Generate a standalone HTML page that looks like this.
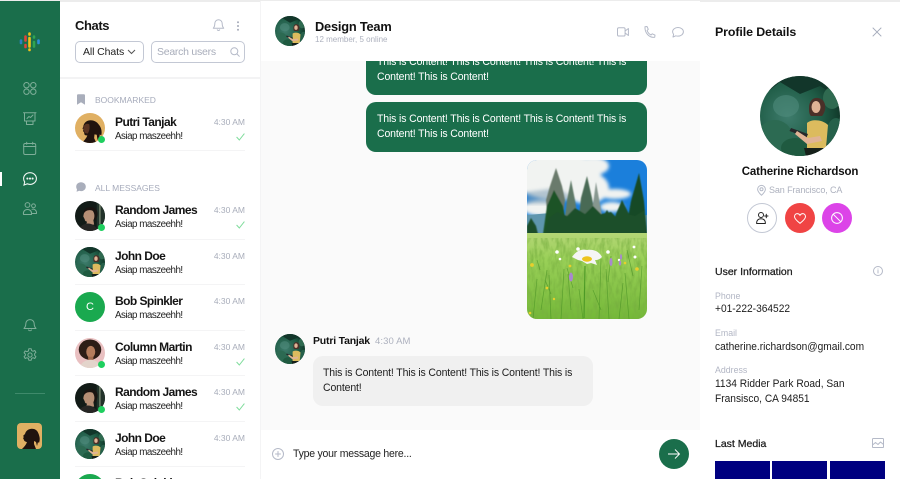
<!DOCTYPE html>
<html><head><meta charset="utf-8"><title>Chats</title>
<style>
html,body{margin:0;padding:0;background:#fff}
#p{position:relative;width:900px;height:479px;overflow:hidden;font-family:"Liberation Sans",sans-serif;color:#141414;background:#fff;filter:blur(.3px)}
#p div{position:absolute;white-space:nowrap}
#p svg{position:absolute;overflow:visible}
.n{left:115px;font-weight:700;font-size:12px;line-height:16px;letter-spacing:-.55px}
.s{left:115px;font-size:9.8px;line-height:14px;letter-spacing:-.5px;color:#222;transform:scaleY(1.07)}
.t{right:655px;font-size:8.5px;line-height:12px;color:#a8adba}
.h{left:95px;font-size:8.5px;line-height:12px;color:#a6abbb}
.l{left:75px;width:170px;height:1px;background:#f4f4f5}
.w{left:377px;font-size:10.5px;line-height:15px;color:#fff;letter-spacing:-.14px;transform:scaleY(1.07)}
.g{font-size:8.8px;line-height:12px;color:#b2b6c4;left:715px}
.v{font-size:10.2px;line-height:15px;left:715px;color:#1b1b1b;transform:scaleY(1.07)}
.b{font-size:10.5px;line-height:14px;left:715px;color:#1b1b1b;-webkit-text-stroke:.25px #1b1b1b}
.dot{width:7px;height:7px;border-radius:50%;background:#1fcf5f;border:0}
.ic{fill:none;stroke:#7fae99;stroke-width:1;stroke-linecap:round;stroke-linejoin:round}
.gr{fill:none;stroke:#b5bac8;stroke-width:1;stroke-linecap:round;stroke-linejoin:round}
</style></head><body><div id="p">
<svg width="0" height="0" style="position:absolute"><defs>
<clipPath id="c"><circle cx="40" cy="40" r="40"/></clipPath>
<radialGradient id="fg" cx=".35" cy=".5" r=".7"><stop offset="0" stop-color="#3e7c6c"/><stop offset=".6" stop-color="#1f5c46"/><stop offset="1" stop-color="#0e3224"/></radialGradient>
<symbol id="forest" viewBox="0 0 80 80"><g clip-path="url(#c)">
<rect width="80" height="80" fill="url(#fg)"/>
<path d="M0 0H80V22L60 10 40 18 20 6 0 22Z" fill="#12362a"/>
<ellipse cx="26" cy="30" rx="13" ry="11" fill="#4f8a7c" opacity=".6"/>
<ellipse cx="15" cy="60" rx="17" ry="16" fill="#2c6a52"/>
<ellipse cx="35" cy="72" rx="14" ry="10" fill="#1f5a40"/>
<ellipse cx="72" cy="22" rx="9" ry="11" fill="#2f6a50"/>
<ellipse cx="76" cy="60" rx="10" ry="18" fill="#25604a"/>
<path d="M47 47C51 43 62 43 68 49L66 72H47Z" fill="#dcbb5e"/>
<path d="M49 32c0-8 5-11 9-10 6 1 8 6 7 12-1 3-2 5-3 6H51c-2-2-2-5-2-8z" fill="#4a3028"/>
<ellipse cx="56" cy="31" rx="4.500" ry="6" fill="#e0b395"/>
<path d="M31 52l17 6-1.500 3.500-17-6.500z" fill="#26282a"/>
<path d="M37 55l11 7 12-2 2 5-15 3-12-10z" fill="#e0b395"/>
<path d="M44 72h20l-4 8H46z" fill="#16201a"/>
</g></symbol>
<symbol id="gold" viewBox="0 0 80 80"><g clip-path="url(#c)">
<rect width="80" height="80" fill="#e0b063"/>
<path d="M22 36c2-13 14-19 26-16 10 3 14 8 19 16 4 7 5 16 3 24l-4-3c0 6-2 11-6 15l-2-14-6-1-1 10 6 13H18c6-6 12-12 15-20-4 0-8-1-8-4l-1-5-3-3 2-3-3-3z" fill="#20130e"/>
<path d="M22 38c3-9 10-11 16-8 2 8 1 17-4 25-4-1-8-1-9-4l-1-5-3-3 2-3z" fill="#5a3422"/>
</g></symbol>
<symbol id="dark" viewBox="0 0 80 80"><g clip-path="url(#c)">
<rect width="80" height="80" fill="#121b17"/>
<rect x="58" y="0" width="22" height="80" fill="#22332a"/>
<rect x="65" y="0" width="3" height="62" fill="#8b9a80"/>
<path d="M24 26c5-13 30-13 35 1 3 9 0 18-5 24H38C27 42 22 34 24 26z" fill="#1a1411"/>
<path d="M23 36c2-10 14-14 24-10 6 7 6 18 2 25l2 12H30l2-8c-4 0-6-3-6-6l-4-8z" fill="#b68f75"/>
<path d="M8 80c3-14 18-20 26-20 12 0 24 8 26 20z" fill="#262624"/>
</g></symbol>
<symbol id="pink" viewBox="0 0 80 80"><g clip-path="url(#c)">
<rect width="80" height="80" fill="#e9c0c1"/>
<ellipse cx="40" cy="31" rx="30" ry="27" fill="#2d1d16"/>
<ellipse cx="42" cy="37" rx="12" ry="16" fill="#b57c5c"/>
<path d="M35 50h14v10H35z" fill="#a06a4e"/>
<path d="M12 80c3-15 18-22 30-22 12 0 24 8 27 22z" fill="#e3d4cb"/>
</g></symbol>
</defs></svg>

<!-- top rule -->
<div style="left:0;top:0;width:900px;height:1.500px;background:#ececec"></div>

<!-- sidebar -->
<div style="left:0;top:1px;width:60px;height:478px;background:#1a6e4b"></div>
<div style="left:0;top:172px;width:2px;height:14px;background:#fff"></div>
<svg style="left:0;top:0" width="60" height="60">
<g stroke-linecap="round" stroke-width="2.600" fill="none">
<path d="M21 40.500v2.500" stroke="#2c7fc4"/>
<path d="M25.500 36.500v4M25.500 45v2" stroke="#e0453a"/>
<path d="M29.500 33.500v1M29.500 38v8.500M29.500 49.500v.5" stroke="#f2c21a"/>
<path d="M34 36.500v1M34 42v4.500" stroke="#30a551"/>
<path d="M38.500 40.500v2.500" stroke="#2c8fd8"/>
</g></svg>
<svg style="left:23px;top:82px" width="14" height="13" class="ic" viewBox="0 0 14 13"><circle cx="3.500" cy="3.200" r="2.700"/><circle cx="10.300" cy="3.200" r="2.700"/><circle cx="3.500" cy="9.700" r="2.700"/><circle cx="10.300" cy="9.700" r="2.700"/></svg>
<svg style="left:23px;top:112px" width="14" height="14" class="ic" viewBox="0 0 14 14"><path d="M.5.800h12.500M1.500.800v8.200h10.500V.800M3.500 9v3.500h6.500V9M4 6.500l2-2 1.500 1 2.500-2.500" /></svg>
<svg style="left:23px;top:142px" width="14" height="13" class="ic" viewBox="0 0 14 13"><rect x=".7" y="1.500" width="12" height="11" rx="1.500"/><path d="M.7 4.500h12M3.700.3v2M9.700.3v2"/></svg>
<svg style="left:23px;top:172px" width="14" height="14" viewBox="0 0 14 14" fill="none" stroke="#eef5f1" stroke-width="1.100"><path d="M7 .7C3.400.7.600 3.300.6 6.600c0 1.300.4 2.400 1.100 3.400L1 13l3.200-1.200c.9.400 1.800.6 2.800.6 3.600 0 6.400-2.600 6.400-5.800S10.600.7 7 .7z"/><circle cx="4.400" cy="6.600" r=".5" fill="#eef5f1"/><circle cx="7" cy="6.600" r=".5" fill="#eef5f1"/><circle cx="9.600" cy="6.600" r=".5" fill="#eef5f1"/></svg>
<svg style="left:23px;top:202px" width="14" height="13" class="ic" viewBox="0 0 14 13"><circle cx="4.500" cy="3" r="2.400"/><circle cx="10.500" cy="3.800" r="1.900"/><path d="M.5 12.500c-.6-3 1.300-5 4-5s4.500 2 4 5zM9 7.300c2.500-.6 4.800 1 4.500 4.200H9.500"/></svg>
<svg style="left:23px;top:319px" width="14" height="13" class="ic" viewBox="0 0 14 13"><path d="M7 .6c-2.600 0-4.200 2-4.200 4.300 0 2.400-.6 3.300-1.800 4.600h12c-1.200-1.300-1.800-2.200-1.800-4.600C11.200 2.600 9.600.6 7 .6zM5.500 11c.4 1 2.600 1 3 0"/></svg>
<svg style="left:23px;top:348px" width="14" height="14" class="ic" viewBox="0 0 14 14"><circle cx="7" cy="7" r="2.100"/><path d="M5.800.8h2.400l.4 1.800 1.500.7 1.700-.8 1.100 1.900-1.300 1.300v1.600l1.300 1.300-1.100 1.900-1.700-.8-1.500.7-.4 1.800H5.800l-.4-1.800-1.500-.7-1.700.8-1.100-1.900 1.300-1.300V6.100L1.100 4.800l1.100-1.900 1.700.8 1.500-.7z"/></svg>
<div style="left:15px;top:393px;width:30px;height:1px;background:#3f8a6b"></div>
<svg style="left:17px;top:423px" width="25" height="26" viewBox="0 0 25 26"><defs><clipPath id="sq"><rect width="25" height="26" rx="4"/></clipPath></defs><g clip-path="url(#sq)"><rect width="25" height="26" fill="#e0b063"/><path d="M8 11c1-4 5-6 9-5 3 1 4 3 5 6 1 3 1 5 0 8l-1-1-1 4-1-4-2-1v3l2 5H5c2-2 4-4 5-7-1 0-3-1-3-2l-1-2 1-1-1-1z" fill="#20130e"/></g></svg>

<!-- chats panel -->
<div style="left:75px;top:18px;font-size:13px;line-height:16px;font-weight:700;color:#151515;letter-spacing:-.4px">Chats</div>
<svg style="left:212px;top:19px" width="13" height="13" class="gr" viewBox="0 0 13 13"><path d="M6.500.8C4.200.8 2.800 2.600 2.800 4.800c0 2.200-.5 3.300-1.500 4.400h10.400c-1-1.100-1.500-2.200-1.500-4.400C10.200 2.600 8.800.8 6.500.8zM5.300 10.800c.4.900 2 .9 2.400 0"/></svg>
<svg style="left:236px;top:21px" width="4" height="10" viewBox="0 0 4 10" fill="#a4a9b8"><circle cx="2" cy="1.300" r="1"/><circle cx="2" cy="5" r="1"/><circle cx="2" cy="8.700" r="1"/></svg>
<div style="left:75px;top:41px;width:67px;height:20px;border:1px solid #c3c8d4;border-radius:5px"></div>
<div style="left:83px;top:45px;font-size:10.500px;line-height:14px;letter-spacing:-.1px;color:#222">All Chats</div>
<svg style="left:127px;top:49px" width="9" height="6" fill="none" stroke="#555" stroke-width="1" viewBox="0 0 9 6"><path d="M1 1l3.500 3.500L8 1"/></svg>
<div style="left:151px;top:41px;width:92px;height:20px;border:1px solid #c3c8d4;border-radius:5px"></div>
<div style="left:157px;top:45px;font-size:10.5px;line-height:14px;letter-spacing:-.25px;color:#a8adba">Search users</div>
<svg style="left:230px;top:47px" width="10" height="10" class="gr" viewBox="0 0 10 10"><circle cx="4.300" cy="4.300" r="3.500"/><path d="M7 7l2.300 2.300"/></svg>
<div style="left:60px;top:77px;width:200px;height:1.500px;background:#f3f3f4"></div>

<svg style="left:76px;top:94px" width="10" height="11" viewBox="0 0 10 11"><path d="M1 1.500C1 .7 1.500.3 2.200.3h5.600c.7 0 1.200.4 1.200 1.200v9.200L5 8.300 1 10.700z" fill="#a9aebb"/></svg>
<div class="h" style="top:93.500px">BOOKMARKED</div>
<svg style="left:75px;top:113px" width="30" height="30"><use href="#gold" width="30" height="30"/></svg>
<div class="dot" style="left:98px;top:136px"></div>
<div class="n" style="top:114px">Putri Tanjak</div><div class="s" style="top:130px">Asiap maszeehh!</div><div class="t" style="top:116px">4:30 AM</div>
<svg style="left:236px;top:133px" width="9" height="8" fill="none" stroke="#7fdc9c" stroke-width="1" viewBox="0 0 9 8"><path d="M.6 4l2.700 3L8.400.6"/></svg>
<div class="l" style="top:150px"></div>

<svg style="left:76px;top:182px" width="10" height="10" viewBox="0 0 10 10"><path d="M5 .3C2.300.3.200 2.200.200 4.700c0 1 .3 1.800.8 2.500L.6 9.700 3.200 8.800c.6.200 1.200.3 1.800.3 2.700 0 4.800-1.900 4.800-4.400S7.700.3 5 .3z" fill="#a9aebb"/></svg>
<div class="h" style="top:181.500px">ALL MESSAGES</div>

<svg style="left:75px;top:201px" width="30" height="30"><use href="#dark" width="30" height="30"/></svg>
<div class="dot" style="left:98px;top:224px"></div>
<div class="n" style="top:202px">Random James</div><div class="s" style="top:218px">Asiap maszeehh!</div><div class="t" style="top:204px">4:30 AM</div>
<svg style="left:236px;top:221px" width="9" height="8" fill="none" stroke="#7fdc9c" stroke-width="1" viewBox="0 0 9 8"><path d="M.6 4l2.700 3L8.400.6"/></svg>
<div class="l" style="top:238.500px"></div>

<svg style="left:75px;top:247px" width="30" height="30"><use href="#forest" width="30" height="30"/></svg>
<div class="n" style="top:248px">John Doe</div><div class="s" style="top:263.500px">Asiap maszeehh!</div><div class="t" style="top:249.500px">4:30 AM</div>
<div class="l" style="top:284px"></div>

<div style="left:75px;top:292px;width:30px;height:30px;border-radius:50%;background:#1aa94f;color:#fff;font-size:11px;line-height:30px;text-align:center">C</div>
<div class="n" style="top:293px">Bob Spinkler</div><div class="s" style="top:309px">Asiap maszeehh!</div><div class="t" style="top:295px">4:30 AM</div>
<div class="l" style="top:329.500px"></div>

<svg style="left:75px;top:338px" width="30" height="30"><use href="#pink" width="30" height="30"/></svg>
<div class="dot" style="left:98px;top:361px"></div>
<div class="n" style="top:339px">Column Martin</div><div class="s" style="top:354.500px">Asiap maszeehh!</div><div class="t" style="top:340.500px">4:30 AM</div>
<svg style="left:236px;top:358px" width="9" height="8" fill="none" stroke="#7fdc9c" stroke-width="1" viewBox="0 0 9 8"><path d="M.6 4l2.700 3L8.400.6"/></svg>
<div class="l" style="top:375px"></div>

<svg style="left:75px;top:383px" width="30" height="30"><use href="#dark" width="30" height="30"/></svg>
<div class="dot" style="left:98px;top:406px"></div>
<div class="n" style="top:384px">Random James</div><div class="s" style="top:400px">Asiap maszeehh!</div><div class="t" style="top:386px">4:30 AM</div>
<svg style="left:236px;top:403px" width="9" height="8" fill="none" stroke="#7fdc9c" stroke-width="1" viewBox="0 0 9 8"><path d="M.6 4l2.700 3L8.400.6"/></svg>
<div class="l" style="top:420.500px"></div>

<svg style="left:75px;top:429px" width="30" height="30"><use href="#forest" width="30" height="30"/></svg>
<div class="n" style="top:430px">John Doe</div><div class="s" style="top:445.500px">Asiap maszeehh!</div><div class="t" style="top:431.500px">4:30 AM</div>
<div class="l" style="top:466px"></div>

<div style="left:75px;top:474px;width:170px;height:5px;overflow:hidden">
<div style="left:0;top:0;width:30px;height:30px;border-radius:50%;background:#1aa94f"></div>
<div class="n" style="left:40px;top:1px">Bob Spinkler</div>
</div>

<!-- main -->
<div style="left:260px;top:61px;width:440px;height:369px;background:#fafafa"></div>
<div style="left:260px;top:1px;width:1px;height:478px;background:#f4f4f5"></div>

<!-- bubbles, clipped by header -->
<div style="left:366px;top:45px;width:281px;height:50px;background:#1a6e4b;border-radius:10px"></div>
<div class="w" style="top:55px">This is Content! This is Content! This is Content! This is</div>
<div class="w" style="top:70px">Content! This is Content!</div>
<div style="left:261px;top:1px;width:439px;height:60px;background:#fff"></div>

<svg style="left:275px;top:16px" width="30" height="30"><use href="#forest" width="30" height="30"/></svg>
<div style="left:315px;top:19px;font-size:12.800px;line-height:16px;font-weight:700;color:#111;letter-spacing:-.2px">Design Team</div>
<div style="left:315px;top:34px;font-size:8px;line-height:12px;color:#adb1be">12 member, 5 online</div>
<svg style="left:617px;top:27px" width="12" height="10" class="gr" viewBox="0 0 12 10"><rect x=".5" y=".8" width="7.600" height="8.200" rx="1.300"/><path d="M8.100 4l3.300-2.500v7L8.100 6"/></svg>
<svg style="left:644px;top:26px" width="12" height="12" class="gr" viewBox="0 0 12 12"><path d="M1 .8l2-.3 1.300 2.800-1.200 1.200c.6 1.800 2 3.500 3.900 4.500l1.200-1.200 2.800 1.300-.3 2.200C5 12 .6 6.600 1 .8z"/></svg>
<svg style="left:672px;top:27px" width="12" height="11" class="gr" viewBox="0 0 12 11"><path d="M6 .5C3 .5.600 2.400.600 4.800c0 1 .4 1.800 1 2.500L1 10l2.800-1.200c.7.200 1.400.3 2.200.3 3 0 5.400-1.900 5.400-4.300S9 .5 6 .5z"/></svg>

<div style="left:366px;top:102px;width:281px;height:50px;background:#1a6e4b;border-radius:10px"></div>
<div class="w" style="top:112px">This is Content! This is Content! This is Content! This is</div>
<div class="w" style="top:127px">Content! This is Content!</div>

<!-- photo -->
<svg style="left:527px;top:160px" width="120" height="159" viewBox="0 0 120 159">
<defs><clipPath id="ph"><rect width="120" height="159" rx="10"/></clipPath>
<filter id="soft" x="-5%" y="-5%" width="110%" height="110%"><feGaussianBlur stdDeviation=".6"/></filter>
<filter id="cl" x="-10%" y="-10%" width="120%" height="120%"><feGaussianBlur stdDeviation="1.800"/></filter>
<filter id="gn" x="0" y="0" width="1" height="1"><feTurbulence type="fractalNoise" baseFrequency=".28 .1" numOctaves="3" seed="4"/><feColorMatrix values="0 0 0 0 .18  0 0 0 0 .42  0 0 0 0 .05  1.500 0 0 0 -.55"/></filter>
<linearGradient id="gm" x1="0" y1="0" x2="0" y2="1"><stop offset="0" stop-color="#b4d676"/><stop offset=".3" stop-color="#9ad058"/><stop offset="1" stop-color="#74b838"/></linearGradient></defs>
<g clip-path="url(#ph)">
<rect width="120" height="80" fill="#1b7fdb"/>
<g filter="url(#cl)" fill="#f1f3f1">
<ellipse cx="30" cy="16" rx="44" ry="24"/>
<ellipse cx="66" cy="6" rx="16" ry="9"/>
<ellipse cx="60" cy="28" rx="22" ry="16"/>
<ellipse cx="88" cy="34" rx="16" ry="5"/>
<ellipse cx="85" cy="47" rx="12" ry="5"/>
<ellipse cx="14" cy="48" rx="18" ry="8"/>
</g>
<path d="M0 32l30-4 14 8-10 8H0z" fill="#7f9eb5" opacity=".55" filter="url(#cl)"/>
<path d="M0 55l24-2 20 6 40 0 36-4v20H0z" fill="#5f96ae"/>
<g filter="url(#soft)">
<path d="M29 8l6 18 3 14-4 34H22l-3-34 4-14z" fill="#6a7a6c"/>
<path d="M27 30l9 16 5 28H16l4-28z" fill="#1a5228"/>
<path d="M44 20l4 20 5 34H36l4-34z" fill="#5f7a68"/>
<path d="M60 16l5 22 6 36H50l4-36z" fill="#4a6a54"/>
<path d="M69 22l4 22 5 30H63l3-30z" fill="#87978f"/>
<path d="M112 13l5 28 3 33H98l6-33z" fill="#174a26"/>
<path d="M95 40l7 14 4 20H84l5-20z" fill="#1a5029"/>
<path d="M80 50l6 10 4 14H70l4-14z" fill="#1c4c28"/>
<path d="M4 58l5 8 2 8H0v-8z" fill="#1d4d2b"/>
<path d="M18 74l4-16 8-6 10 4 8-8 10 6 8-8 8 8 10-2 8 8 8-6 8 2 10-6v24z" fill="#1e4f29"/>
</g>
<rect y="73" width="120" height="86" fill="url(#gm)"/>
<rect y="78" width="120" height="81" filter="url(#gn)"/>
<g stroke="#3f8a20" stroke-width=".7" fill="none" opacity=".6">
<path d="M6 159l4-40M14 150l6-40M24 159l-2-44M34 159l3-50M44 150l-3-36M56 159l-4-30M72 159l2-60M82 159l-3-50M92 159l4-36M102 159l-4-46M112 150l3-44M18 120l6 14M40 108l6 20M84 96l-3 26M100 90l6 26M10 100l3 10M66 130l8 20"/>
</g>
<g fill="#fff"><circle cx="30" cy="92" r="1.800"/><circle cx="33" cy="99" r="1.300"/><circle cx="81" cy="92" r="1.800"/><circle cx="108" cy="97" r="1.500"/><circle cx="107" cy="87" r="1.400"/><circle cx="92" cy="100" r="1.200"/><circle cx="51" cy="89" r="1.800"/></g>
<g fill="#e8cf2c"><circle cx="5" cy="105" r="1.900"/><circle cx="43" cy="106" r="1.400"/><circle cx="110" cy="109" r="1.800"/><circle cx="98" cy="103" r="1.300"/><circle cx="20" cy="128" r="1.400"/><circle cx="3" cy="153" r="1.300"/><circle cx="27" cy="139" r="1.200"/></g>
<g fill="#a988cf"><ellipse cx="44" cy="117" rx="2" ry="4.500"/><ellipse cx="84" cy="102" rx="1.500" ry="4"/><ellipse cx="93" cy="103" rx="1.200" ry="2.500"/><ellipse cx="94" cy="97" rx="1" ry="3"/></g>
<path d="M58 106l-1 52" stroke="#4c9a26" stroke-width="1.100" fill="none"/>
<path d="M45 97c5-7 10-8 15-7 6-1 12 1 15 7-3 3-5 3-7 3l2 5-6-2-4 1-5-3-4-1z" fill="#f5f5f5"/>
<ellipse cx="60" cy="99" rx="5" ry="2.700" fill="#edc41c"/>
</g></svg>

<!-- incoming -->
<svg style="left:275px;top:334px" width="30" height="30"><use href="#forest" width="30" height="30"/></svg>
<div style="left:313px;top:334px;font-size:10.500px;line-height:14px;font-weight:700;color:#111;letter-spacing:-.2px">Putri Tanjak</div>
<div style="left:375px;top:335px;font-size:9.500px;line-height:13px;color:#adb1be;letter-spacing:.1px">4:30 AM</div>
<div style="left:313px;top:356px;width:280px;height:50px;background:#f0f0f0;border-radius:10px"></div>
<div class="w" style="left:323px;top:366px;color:#1e1e1e">This is Content! This is Content! This is Content! This is</div>
<div class="w" style="left:323px;top:381px;color:#1e1e1e">Content!</div>

<!-- input -->
<svg style="left:272px;top:448px" width="12" height="12" class="gr" viewBox="0 0 12 12"><circle cx="6" cy="6" r="5.500"/><path d="M6 3.500v5M3.500 6h5"/></svg>
<div style="left:293px;top:446.500px;font-size:10.500px;line-height:15px;letter-spacing:-.23px;color:#222;transform:scaleY(1.07)">Type your message here...</div>
<div style="left:659px;top:439px;width:30px;height:30px;border-radius:50%;background:#1a6e4b"></div>
<svg style="left:668px;top:448px" width="12" height="12" fill="none" stroke="#fff" stroke-width=".9" viewBox="0 0 12 12"><path d="M0 6h11.500M7 1.500l4.500 4.500-4.500 4.500"/></svg>

<!-- profile -->
<div style="left:715px;top:24px;font-size:12.400px;line-height:16px;font-weight:700;color:#111;letter-spacing:-.1px">Profile Details</div>
<svg style="left:872px;top:27px" width="10" height="10" fill="none" stroke="#a5abbb" stroke-width="1" viewBox="0 0 10 10"><path d="M.7.700l8.600 8.600M9.300.700L.7 9.300"/></svg>
<svg style="left:760px;top:76px" width="80" height="80"><use href="#forest" width="80" height="80"/></svg>
<div style="left:700px;top:165px;width:200px;text-align:center;font-size:11.500px;line-height:15px;font-weight:700;color:#111;letter-spacing:-.15px">Catherine Richardson</div>
<svg style="left:757px;top:185px" width="9" height="11" class="gr" viewBox="0 0 9 11"><path d="M4.500 10.300C2 8 .6 6.300.6 4.300a3.900 3.900 0 017.800 0c0 2-1.400 3.700-3.900 6z"/><circle cx="4.500" cy="4.300" r="1.500"/></svg>
<div style="left:769px;top:183.500px;font-size:9px;line-height:13px;color:#adb1be;letter-spacing:-.1px">San Francisco, CA</div>
<div style="left:747px;top:203px;width:28px;height:28px;border:1px solid #c3c8d4;border-radius:50%"></div>
<svg style="left:756px;top:212px" width="13" height="12" fill="none" stroke="#222" stroke-width="1" stroke-linecap="round" viewBox="0 0 13 12"><circle cx="5" cy="3" r="2.500"/><path d="M.7 11.500c-.4-3 1.600-4.800 4.300-4.800s4.700 1.800 4.300 4.800zM10.300 2.300v3.400M8.600 4H12"/></svg>
<div style="left:785px;top:203px;width:30px;height:30px;border-radius:50%;background:#f04444"></div>
<svg style="left:794px;top:213px" width="12" height="11" fill="none" stroke="#fff" stroke-width="1" viewBox="0 0 12 11"><path d="M6 10.300C2.500 7.600.5 5.700.5 3.500.5 1.800 1.800.6 3.200.6 4.300.6 5.400 1.200 6 2.300 6.600 1.200 7.700.6 8.800.6c1.400 0 2.700 1.200 2.700 2.900 0 2.200-2 4.100-5.500 6.800z"/></svg>
<div style="left:822px;top:203px;width:30px;height:30px;border-radius:50%;background:#dc44e8"></div>
<svg style="left:831px;top:212px" width="12" height="12" fill="none" stroke="#fff" stroke-width="1" viewBox="0 0 12 12"><circle cx="6" cy="6" r="5.400"/><path d="M2.200 2.200l7.600 7.600"/></svg>

<div class="b" style="top:264.500px">User Information</div>
<svg style="left:873px;top:266px" width="10" height="10" class="gr" viewBox="0 0 10 10"><circle cx="5" cy="5" r="4.500"/><path d="M5 4.500v2.500M5 3v.1"/></svg>
<div class="g" style="top:289.500px">Phone</div>
<div class="v" style="top:302px">+01-222-364522</div>
<div class="g" style="top:326.500px">Email</div>
<div class="v" style="top:339.500px">catherine.richardson@gmail.com</div>
<div class="g" style="top:363.500px">Address</div>
<div class="v" style="top:376.500px">1134 Ridder Park Road, San</div>
<div class="v" style="top:391.500px">Fransisco, CA 94851</div>
<div class="b" style="top:436.500px">Last Media</div>
<svg style="left:872px;top:438px" width="12" height="10" class="gr" viewBox="0 0 12 10"><rect x=".5" y=".5" width="11" height="9" rx=".8"/><path d="M.5 7l3-2.500L6 6.500 8.500 4l3 2.500"/></svg>
<div style="left:715px;top:461px;width:55px;height:18px;background:#000080"></div>
<div style="left:772px;top:461px;width:55px;height:18px;background:#000080"></div>
<div style="left:830px;top:461px;width:55px;height:18px;background:#000080"></div>
</div></body></html>
